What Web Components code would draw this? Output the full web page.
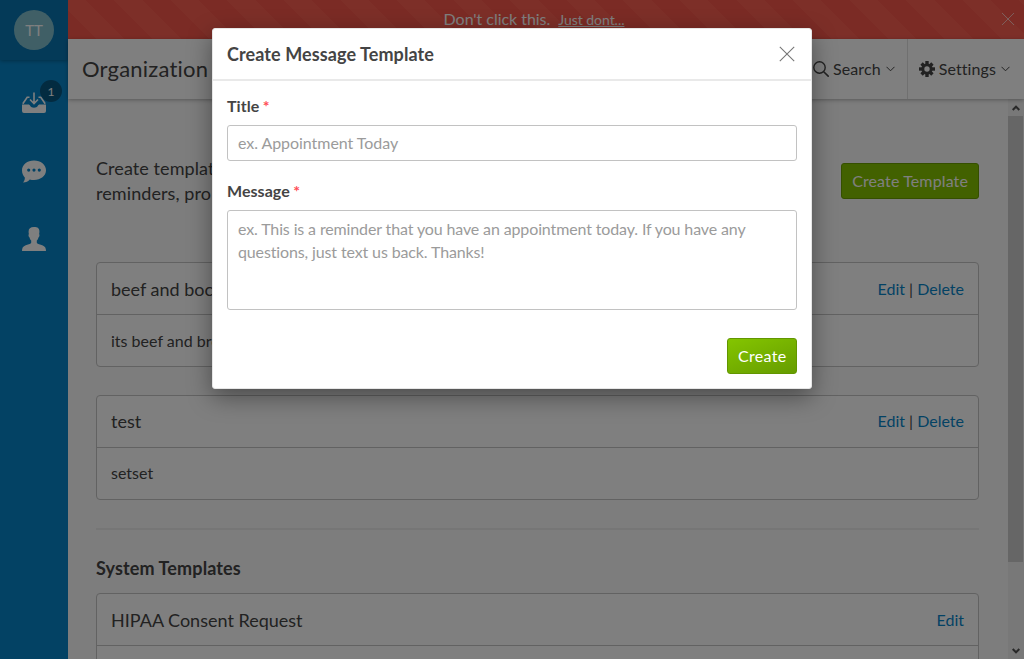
<!DOCTYPE html>
<html lang="en">
<head>
<meta charset="utf-8">
<title>Message Templates</title>
<style>
html,body{margin:0;height:100%;overflow:hidden}
body{font-family:Lato,"Liberation Sans",sans-serif;font-size:16px;color:#444;font-variant-ligatures:none}
</style>
</head>
<body>
<app-shell></app-shell>
<script>
const define = (name, html) => customElements.define(name, class extends HTMLElement {
  constructor(){
    super();
    const t = document.createElement('template');
    t.innerHTML = html;
    this.attachShadow({mode:'open'}).append(t.content.cloneNode(true));
  }
});

define('side-nav', `<style>
:host{display:flex;flex-direction:column;width:68px;flex:none;background:#0785c9;color:#fff}
.user{height:60px;display:flex;align-items:center;justify-content:center;background:#0974b1;box-shadow:0 1px 4px rgba(0,0,0,.3)}
.avatar{width:40px;height:40px;border-radius:50%;background:#81bfcd;display:flex;align-items:center;justify-content:center;font-size:15px;line-height:20px}
nav{display:flex;flex-direction:column;padding-top:10px}
.item{height:68px;display:flex;align-items:center;justify-content:center;position:relative}
.badge{position:absolute;left:40px;top:10px;width:22px;height:22px;border-radius:50%;background:#075681;font-size:12px;line-height:23px;text-align:center}
svg{display:block;fill:currentColor;margin-top:-2px}
</style>
<div class="user"><div class="avatar">TT</div></div>
<nav>
<div class="item"><svg width="24" height="22" viewBox="0 0 24 22"><path d="M0 12.5h6.3c1 0 1.4.5 2 1.5.7 1.3 1.8 1.7 3.7 1.7s3-.4 3.7-1.7c.6-1 1-1.500 2-1.500H24V19q0 2-2 2H2q-2 0-2-2z"/><path d="M.8 11.700 5.200 5.200H7.500M23.200 11.700 18.800 5.200H16.500M12 .5V10.500M8 7.500l4 4 4-4" fill="none" stroke="#fff" stroke-width="1.600"/></svg><span class="badge">1</span></div>
<div class="item"><svg width="24" height="23" viewBox="0 0 24 23"><path fill-rule="evenodd" d="M12 .5c6.700 0 12 4.200 12 9.800S18.700 20 12 20c-1.500 0-2.900-.2-4.200-.6C6.300 21.200 4 22.300 1 22.500c1.200-1.200 2-3 1.800-4.900C1.100 15.800 0 13.300 0 10.300 0 4.700 5.300.5 12 .5zM6.700 8.500a1.600 1.600 0 1 0 0 3.200 1.600 1.600 0 0 0 0-3.200zm5.300 0a1.600 1.600 0 1 0 0 3.200 1.600 1.600 0 0 0 0-3.200zm5.300 0a1.600 1.600 0 1 0 0 3.200 1.600 1.600 0 0 0 0-3.200z"/></svg></div>
<div class="item"><svg width="24" height="24" viewBox="0 0 24 24"><path d="M12 0c3.700 0 5.400 1.200 5.400 4.500 0 1-.1 1.900-.3 2.500.8.7.3 2.800-.5 3.200-.4 1.500-1 2.500-1.800 3.300v2.200c.7 1.700 3.300 1.600 6 2.700 2.400 1 3.200 2.700 3.200 5.600H0c0-2.900.8-4.600 3.200-5.600 2.700-1.100 5.300-1 6-2.700v-2.200c-.8-.8-1.400-1.800-1.800-3.300-.8-.4-1.300-2.500-.5-3.200-.2-.6-.3-1.500-.3-2.500C6.600 1.500 8.300 0 12 0z"/></svg></div>
</nav>`);

define('alert-banner', `<style>
:host{display:flex;height:39px;flex:none;align-items:center;justify-content:center;position:relative;color:#fff;
background:repeating-linear-gradient(45deg,#f6574a 0 20px,#fa5e51 20px 40px)}
p{margin:0;line-height:20px;padding-right:24px;letter-spacing:-.04px}
a{font-size:14px;text-decoration:underline;margin-left:4px}
svg{position:absolute;right:9px;top:12px}
</style><p><slot></slot> <a>Just dont...</a></p>
<svg width="14" height="14"><path d="M1 1l12 12M13 1L1 13" stroke="#fff" stroke-opacity=".6" fill="none"/></svg>`);

define('page-header', `<style>
:host{display:flex;height:60px;flex:none;background:#fff;box-shadow:0 1px 4px rgba(0,0,0,.3);z-index:1;justify-content:space-between}
h1{margin:0;padding-left:14px;font-size:22px;font-weight:400;line-height:60px;letter-spacing:.2px}
.menu{display:flex}
.item{display:flex;align-items:center;line-height:20px;padding-right:12px}
.item+.item{border-left:1px solid #e0e0e0;padding-left:11px;padding-right:14px}
.item svg{flex:none}
.label{margin:0 5px 0 4px;letter-spacing:.1px}
</style>
<h1><slot></slot></h1>
<div class="menu">
<div class="item"><svg width="16" height="16"><circle cx="6.500" cy="6.500" r="5.700" fill="none" stroke="#444" stroke-width="1.400"/><path d="M10.700 10.700l5 5" stroke="#444" stroke-width="1.600"/></svg><span class="label">Search</span><svg width="9" height="6"><path d="M.5.8l4 4 4-4" fill="none" stroke="#444"/></svg></div>
<div class="item"><svg width="16" height="16" viewBox="-8 -8 16 16"><g fill="#444"><path d="M-1.700-8h3.400v16h-3.400z"/><path d="M-8-1.700h16v3.400h-16z"/><path d="M-1.700-7.700h3.400v15.400h-3.400z" transform="rotate(45)"/><path d="M-1.700-7.700h3.400v15.400h-3.400z" transform="rotate(-45)"/><circle r="5.600"/></g><circle r="2.700" fill="#fff"/></svg><span class="label">Settings</span><svg width="9" height="6"><path d="M.5.8l4 4 4-4" fill="none" stroke="#444"/></svg></div>
</div>`);

define('ui-button', `<style>
:host{display:inline-block;box-sizing:border-box;height:36px;padding:0 10px;border:1px solid #629600;border-radius:3px;background:linear-gradient(160deg,#84c500,#669c00);color:#fff;line-height:34px;white-space:nowrap;letter-spacing:.12px}
:host([flat]){background:#84c200;border-color:#6a9f00}
</style><slot></slot>`);

define('template-card', `<style>
:host{display:block;box-sizing:border-box;border:1px solid #c4c4c4;border-radius:4px;background:#fff}
.head{box-sizing:border-box;height:52px;display:flex;justify-content:space-between;align-items:center;padding:0 14px var(--lift,0px);border-bottom:1px solid #c4c4c4;font-size:18px;line-height:24px}
.links{font-size:16px;color:#444}
.body{height:51px;padding:0 14px;line-height:calc(52px - var(--lift,0px))}
::slotted(a){color:#0785c9}
</style>
<div class="head"><span><slot name="title"></slot></span><span class="links"><slot name="links"></slot></span></div>
<div class="body"><slot></slot></div>`);

define('scroll-bar', `<style>
:host{display:flex;flex-direction:column;width:16px;flex:none;background:#f1f1f1;align-items:center}
.thumb{height:446px;width:15px;align-self:flex-start;background:#cdcdcd}
.up{margin:6px 1px 5px 0}.down{margin:auto 1px 5px 0}
svg{flex:none}
</style>
<svg class="up" width="8" height="6"><path d="M.7 5L4 1.700 7.300 5" fill="none" stroke="#505050" stroke-width="2"/></svg>
<div class="thumb"></div>
<svg class="down" width="8" height="6"><path d="M.7 1L4 4.300 7.300 1" fill="none" stroke="#505050" stroke-width="2"/></svg>`);

define('form-field', `<style>
:host{display:block}
label{display:block;font-weight:700;line-height:20px;margin-bottom:9px;letter-spacing:.05px}
i{font-style:normal;color:#ff4d55;margin-left:-.5px}
.box{box-sizing:border-box;min-height:var(--box-height,36px);border:1px solid #c2c2c2;border-radius:3px;padding:var(--box-pad,5px) 10px 5px;line-height:23px;color:#9b9b9b;letter-spacing:var(--box-spacing,-.05px)}
</style><label><slot name="label"></slot> <i>*</i></label><div class="box"><slot></slot></div>`);

define('modal-dialog', `<style>
:host{display:flex;flex-direction:column;box-sizing:border-box;width:600px;height:361px;background:#fff;border:1px solid #e6e6e6;border-radius:3px;box-shadow:0 8px 24px rgba(0,0,0,.4)}
header{display:flex;justify-content:space-between;align-items:center;height:50px;padding:0 16px 0 14px;border-bottom:2px solid #e9e9e9}
h2{margin:0;font-size:18px;line-height:24px;font-weight:700;letter-spacing:.09px}
form{display:flex;flex-direction:column;padding:15px 14px 0;gap:20px}
.message{--box-height:100px;--box-pad:6px;--box-spacing:-.13px}
footer{display:flex;justify-content:flex-end;margin-top:8px}
footer ui-button{width:70px;letter-spacing:.3px}
</style>
<header><h2>Create Message Template</h2><svg width="16" height="16"><path d="M.8.8l14.400 14.400M15.200.8L.8 15.200" stroke="#777" stroke-width="1.100"/></svg></header>
<form>
<form-field><span slot="label">Title</span>ex. Appointment Today</form-field>
<form-field class="message"><span slot="label">Message</span>ex. This is a reminder that you have an appointment today. If you have any questions, just text us back. Thanks!</form-field>
<footer><ui-button>Create</ui-button></footer>
</form>`);

define('app-shell', `<style>
:host{display:flex;height:100vh;overflow:hidden;position:relative}
.main{flex:1;min-width:0;display:flex;flex-direction:column}
.scroll{flex:1;min-height:0;display:flex;background:#fafafa}
.content{flex:1;min-width:0;overflow:hidden;padding:57px 29px 0 28px;display:flex;flex-direction:column}
.intro{display:flex;justify-content:space-between;align-items:flex-start;height:106px;flex:none}
.intro p{margin:0;font-size:18px;line-height:25px;letter-spacing:.08px}
.intro ui-button{margin-top:7px}
template-card{flex:none;margin-bottom:28px}
template-card.raised{--lift:2px}
template-card a{color:#0785c9}
hr{box-sizing:border-box;width:100%;height:2px;flex:none;margin:0;border:0;background:#ededed}
h3{margin:26px 0 13px;font-size:18px;line-height:24px;font-weight:700;flex:none;letter-spacing:.12px}
.overlay{position:absolute;inset:0;z-index:5;background:rgba(0,0,0,.5);display:flex;justify-content:center;align-items:flex-start;padding-top:28px}
</style>
<side-nav></side-nav>
<div class="main">
<alert-banner>Don't click this.</alert-banner>
<page-header>Organization</page-header>
<div class="scroll"><div class="content">
<div class="intro"><p>Create templates<br>reminders, pro</p><ui-button flat>Create Template</ui-button></div>
<template-card><span slot="title">beef and bocc</span><span slot="links"><a>Edit</a> | <a>Delete</a></span>its beef and bro</template-card>
<template-card class="raised"><span slot="title">test</span><span slot="links"><a>Edit</a> | <a>Delete</a></span>setset</template-card>
<hr><h3>System Templates</h3>
<template-card><span slot="title">HIPAA Consent Request</span><span slot="links"><a>Edit</a></span></template-card>
</div><scroll-bar></scroll-bar></div>
</div>
<div class="overlay"><modal-dialog></modal-dialog></div>`);
</script>
</body>
</html>
